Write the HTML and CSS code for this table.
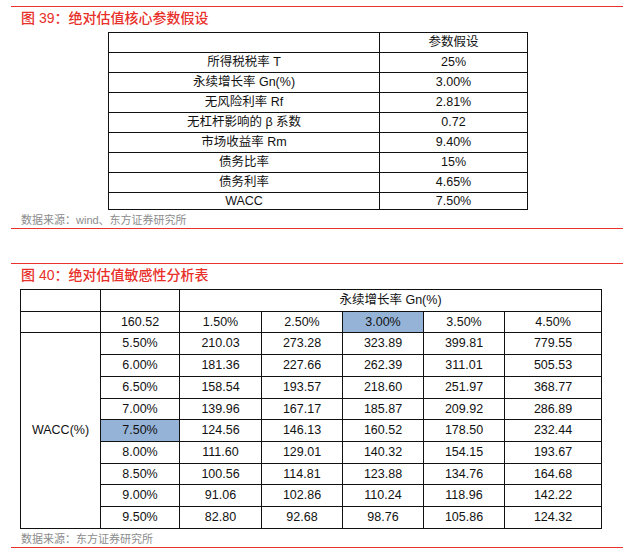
FILE: index.html
```html
<!DOCTYPE html>
<html lang="zh-CN">
<head>
<meta charset="utf-8">
<title>绝对估值</title>
<link rel="stylesheet" href="styles.css">
</head>
<body>
<div class="page">
  <div class="rule"></div>
  <div class="title">图 39：绝对估值核心参数假设</div>
  <table class="params">
    <colgroup><col class="c-name"><col class="c-val"></colgroup>
    <tr><td></td><td>参数假设</td></tr>
    <tr><td>所得税税率 T</td><td>25%</td></tr>
    <tr><td>永续增长率 Gn(%)</td><td>3.00%</td></tr>
    <tr><td>无风险利率 Rf</td><td>2.81%</td></tr>
    <tr><td>无杠杆影响的 β 系数</td><td>0.72</td></tr>
    <tr><td>市场收益率 Rm</td><td>9.40%</td></tr>
    <tr><td>债务比率</td><td>15%</td></tr>
    <tr><td>债务利率</td><td>4.65%</td></tr>
    <tr class="last"><td>WACC</td><td>7.50%</td></tr>
  </table>
  <div class="source">数据来源：wind、东方证券研究所</div>
  <div class="rule"></div>

  <div class="rule gap"></div>
  <div class="title">图 40：绝对估值敏感性分析表</div>
  <table class="sens">
    <colgroup>
      <col class="s1"><col class="s2"><col class="s3"><col class="s4"><col class="s5"><col class="s6"><col class="s7">
    </colgroup>
    <tr><td></td><td></td><td colspan="5">永续增长率 Gn(%)</td></tr>
    <tr><td></td><td>160.52</td><td>1.50%</td><td>2.50%</td><td class="hl">3.00%</td><td>3.50%</td><td>4.50%</td></tr>
    <tr><td rowspan="9">WACC(%)</td><td>5.50%</td><td>210.03</td><td>273.28</td><td>323.89</td><td>399.81</td><td>779.55</td></tr>
    <tr><td>6.00%</td><td>181.36</td><td>227.66</td><td>262.39</td><td>311.01</td><td>505.53</td></tr>
    <tr><td>6.50%</td><td>158.54</td><td>193.57</td><td>218.60</td><td>251.97</td><td>368.77</td></tr>
    <tr><td>7.00%</td><td>139.96</td><td>167.17</td><td>185.87</td><td>209.92</td><td>286.89</td></tr>
    <tr><td class="hl">7.50%</td><td>124.56</td><td>146.13</td><td>160.52</td><td>178.50</td><td>232.44</td></tr>
    <tr><td>8.00%</td><td>111.60</td><td>129.01</td><td>140.32</td><td>154.15</td><td>193.67</td></tr>
    <tr><td>8.50%</td><td>100.56</td><td>114.81</td><td>123.88</td><td>134.76</td><td>164.68</td></tr>
    <tr><td>9.00%</td><td>91.06</td><td>102.86</td><td>110.24</td><td>118.96</td><td>142.22</td></tr>
    <tr><td>9.50%</td><td>82.80</td><td>92.68</td><td>98.76</td><td>105.86</td><td>124.32</td></tr>
  </table>
  <div class="source">数据来源：东方证券研究所</div>
  <div class="rule"></div>
</div>
</body>
</html>
```

FILE: styles.css
```css
html, body {
  margin: 0;
  padding: 0;
  background: #ffffff;
}

body {
  font-family: "Liberation Sans", Arial, "Noto Sans CJK SC", sans-serif;
  color: #111111;
}

.page {
  width: 612px;
  padding: 6px 0 0 11px;
}

.rule {
  height: 1px;
  background: #e8322b;
}

.rule.gap {
  margin-top: 34px;
}

.title {
  margin-left: 10px;
  font-size: 14px;
  line-height: 22px;
  font-weight: 500;
  color: #e8302a;
}

table {
  border-collapse: collapse;
  table-layout: fixed;
  margin-top: 3px;
}

td {
  border: 1px solid #111111;
  padding: 0;
  text-align: center;
  white-space: nowrap;
  color: #111111;
}

.params {
  margin-left: 97px;
  width: 419px;
  font-size: 12.5px;
}

.params .c-name { width: 271px; }
.params .c-val { width: 148px; }

.params td {
  line-height: 19px;
}

.params tr.last td {
  line-height: 16px;
}

.sens {
  margin-left: 9px;
  width: 581px;
  font-size: 12.5px;
}

.sens td {
  line-height: 20.7px;
}

.sens .s1 { width: 80px; }
.sens .s2 { width: 79px; }
.sens .s3 { width: 82px; }
.sens .s4 { width: 81px; }
.sens .s5 { width: 81px; }
.sens .s6 { width: 81px; }
.sens .s7 { width: 97px; }

.sens td.hl {
  background: #95b3d7;
}

.source {
  margin-top: 2px;
  margin-left: 10px;
  font-size: 11px;
  line-height: 16px;
  color: #8c8c8c;
}
```
